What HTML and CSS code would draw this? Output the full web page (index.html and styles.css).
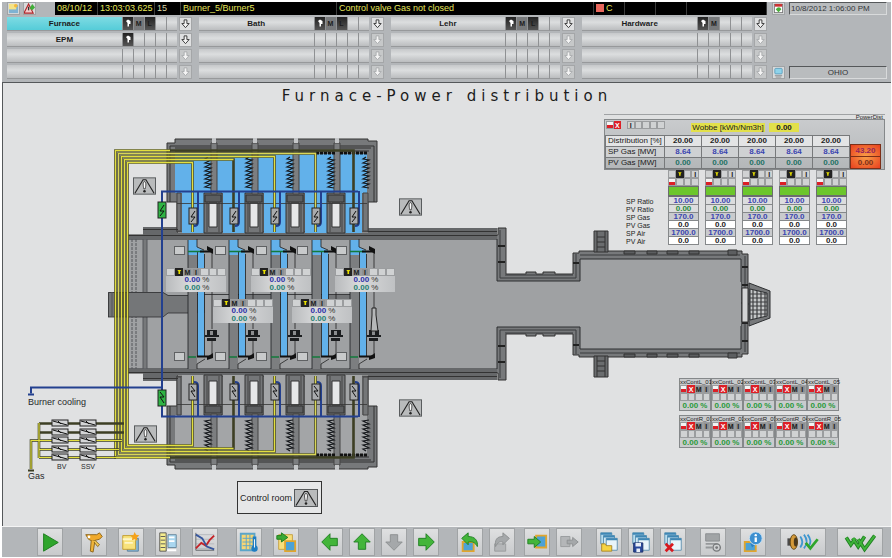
FILE: index.html
```html
<!DOCTYPE html>
<html lang="en">
<head>
  <meta charset="UTF-8" />
  <meta name="viewport" content="width=device-width, initial-scale=1.0"/>
  <title>Furnace - Power distribution</title>
  <link rel="stylesheet" href="styles.css">
</head>
<body>

  <!-- Shared icons -->
  <svg class="sprite" aria-hidden="true">
    <symbol id="i-warn" viewBox="0 0 24 18">
      <rect x=".5" y=".5" width="23" height="17" fill="#b9bbbc" stroke="#55585a"/>
      <path d="M2 16.500L10.500 2.500h3L22 16.500" fill="none" stroke="#222" stroke-width="1.200"/>
      <path d="M12 4.500c-2 0-1.500 4-.7 7.500h1.400c.8-3.500 1.300-7.500-.7-7.500z" fill="#fff" stroke="#222" stroke-width=".8"/>
      <circle cx="12" cy="14.500" r="1.300" fill="#222"/>
    </symbol>
    <symbol id="i-down" viewBox="0 0 12 12">
      <path d="M4.500 1.500h3v4h2.500L6 10 2 5.500h2.500z" fill="#f4f4f4" stroke="currentColor"/>
    </symbol>
    <symbol id="i-hand" viewBox="0 0 8 8">
      <path d="M2 2l2-1.500L6.500 2v3H5v2.500H3.500V4z" fill="#fff"/>
    </symbol>
    <symbol id="i-auto" viewBox="0 0 8 7">
      <path d="M1.500 1h5L5 3v3H3V3z" fill="#e8e000"/>
    </symbol>
    <symbol id="i-page" viewBox="0 0 12 12">
      <rect x="1" y="2" width="10" height="9" fill="#7fb2d2"/>
      <path d="M1 1h8v6H1z" fill="#f6e386"/>
      <circle cx="8.500" cy="3" r="2" fill="#f5b93c"/>
    </symbol>
    <symbol id="i-alarm" viewBox="0 0 12 12">
      <path d="M5 1l5 10H0z" fill="#f3c9c9" stroke="#b02226" stroke-width="1.200"/>
      <path d="M5 4v4" stroke="#333" stroke-width="1.400"/>
      <path d="M6 6l3-5 3 4-3 3z" fill="#3fae3a"/>
    </symbol>
    <symbol id="i-ack" viewBox="0 0 12 12">
      <rect x="1.500" y="1.500" width="9" height="9" fill="#fff" stroke="#777"/>
      <path d="M2 1h8v3H2z" fill="#c33"/>
      <path d="M3 7c2-3 5-3 6 0l-3 3z" fill="#4cae3d"/>
    </symbol>
    <symbol id="i-screen" viewBox="0 0 12 12">
      <rect x="2" y="1.500" width="8" height="6" rx="1" fill="#8fd3ea" stroke="#5d9fbd"/>
      <path d="M2 9.500h8M3 11h6" stroke="#8a8d90"/>
    </symbol>

    <!-- Toolbar icons, all on a 24 grid -->
    <symbol id="t-play" viewBox="0 0 24 24"><path d="M5 3l16 9.500L5 22z" fill="#2fa52c" stroke="#1b7d1c"/></symbol>
    <symbol id="t-key" viewBox="0 0 24 24">
      <path d="M3 4h12l3-2 3 4-3 3-8 2-4-2z" fill="#f0a92a" stroke="#8b6418"/>
      <path d="M9 10l-1 12 3 1 2-12" fill="#f0b53a" stroke="#8b6418"/>
      <path d="M13 10l5 5-2 2-4-5" fill="#f4cd59" stroke="#8b6418"/>
      <circle cx="6.500" cy="6.500" r="1.500" fill="#fff"/>
    </symbol>
    <symbol id="t-window" viewBox="0 0 24 24">
      <path d="M8 8h12v14H8z" fill="#88b8d6" stroke="#5b7f9b"/>
      <path d="M3 5h14v15H3z" fill="#f8e27b" stroke="#c29c2f"/>
      <path d="M3 9h14M5 13h9" stroke="#fdf6c8" stroke-width="2"/>
      <path d="M16 1l1.500 3 3.500.5-2.500 2.500.5 3.500-3-1.500L13 10l.5-3L11 5l3.500-.5z" fill="#f5a21b"/>
    </symbol>
    <symbol id="t-list" viewBox="0 0 24 24">
      <path d="M3 2h7v20H3z" fill="#f5ec8e" stroke="#555"/>
      <path d="M4 6h5M4 10h5M4 14h5M4 18h5" stroke="#555"/>
      <path d="M12 4h9v14h-9z" fill="#a9d6ef" stroke="#68889c"/>
      <path d="M13 7h6M13 11h6M11 21h10" stroke="#fff" stroke-width="2"/>
    </symbol>
    <symbol id="t-chart" viewBox="0 0 24 24">
      <path d="M2 4h20M2 9h20M2 14h20M2 19h20" stroke="#b3b8bc"/>
      <path d="M2 2v19h20" fill="none" stroke="#606468"/>
      <path d="M2 19l6-6 5 3 4-6 5-5" fill="none" stroke="#c42126" stroke-width="2"/>
      <path d="M2 4l7 4 5 9 8 3" fill="none" stroke="#36569d" stroke-width="2"/>
    </symbol>
    <symbol id="t-temp" viewBox="0 0 24 24">
      <path d="M3 3h15v18H3z" fill="#f7d574" stroke="#5ba5c9" stroke-width="2"/>
      <path d="M5 8h11M5 12h11M5 16h11M9 4v16M13 4v16" stroke="#5ba5c9"/>
      <path d="M18 6v12" stroke="#1f7dc2" stroke-width="4"/>
      <circle cx="18" cy="19" r="3.500" fill="#1f7dc2"/>
      <path d="M18 9v9" stroke="#fff"/>
    </symbol>
    <symbol id="t-import" viewBox="0 0 24 24">
      <path d="M4 4h15v16H4z" fill="#f8df7c" stroke="#c4a042"/>
      <path d="M11 11h11v11H11z" fill="#4ca2d6" stroke="#e0a52e" stroke-width="2"/>
      <path d="M2 9V5h5V2l7 5-7 5V9z" fill="#3aa935" stroke="#1b7d1c"/>
    </symbol>
    <symbol id="t-left" viewBox="0 0 24 24"><path d="M3 12l9-9v5h8v8h-8v5z" fill="#43b53a" stroke="#1f7f22"/></symbol>
    <symbol id="t-up" viewBox="0 0 24 24"><path d="M12 3l9 9h-5v8H8v-8H3z" fill="#43b53a" stroke="#1f7f22"/></symbol>
    <symbol id="t-downoff" viewBox="0 0 24 24"><path d="M12 21l9-9h-5V4H8v8H3z" fill="#a5a8aa" stroke="#8c8f91"/></symbol>
    <symbol id="t-right" viewBox="0 0 24 24"><path d="M21 12l-9-9v5H4v8h8v5z" fill="#43b53a" stroke="#1f7f22"/></symbol>
    <symbol id="t-undo" viewBox="0 0 24 24">
      <path d="M4 12h12v10H4z" fill="#4ca2d6" stroke="#e0a52e" stroke-width="2"/>
      <path d="M3 8l7-6v4c7 0 11 4 10 11-2-4-5-6-10-5v3z" fill="#43b53a" stroke="#1f7f22"/>
    </symbol>
    <symbol id="t-redo" viewBox="0 0 24 24">
      <path d="M4 14h12v8H4z" fill="#b4b6b8" stroke="#989b9d"/>
      <path d="M20 8l-7-6v4C6 6 4 10 5 17c2-4 4-6 8-5v3z" fill="#a5a8aa" stroke="#8c8f91"/>
    </symbol>
    <symbol id="t-in" viewBox="0 0 24 24">
      <path d="M11 5h11v13H11z" fill="#4ca2d6" stroke="#e0a52e" stroke-width="2"/>
      <path d="M2 14V9h7V6l7 6-7 6v-4z" fill="#43b53a" stroke="#1f7f22"/>
    </symbol>
    <symbol id="t-out" viewBox="0 0 24 24">
      <path d="M3 6h10v11H3z" fill="#b4b6b8" stroke="#989b9d"/>
      <path d="M10 14v-4h6V7l6 5-6 5v-3z" fill="#a5a8aa" stroke="#8c8f91"/>
    </symbol>
    <symbol id="t-stack" viewBox="0 0 24 24">
      <path d="M3 2h12v12H3z" fill="#b8ddf0" stroke="#5d8fae"/>
      <path d="M6 5h12v12H6z" fill="#cfe8f5" stroke="#5d8fae"/>
      <path d="M9 8h12v13H9z" fill="#e8f4fa" stroke="#5d8fae"/>
      <path d="M3 3h12M6 6h12M9 9h12" stroke="#3f87b5" stroke-width="2"/>
    </symbol>
    <symbol id="t-open" viewBox="0 0 24 24">
      <use href="#t-stack"/>
      <path d="M4 14h4l1 2h6v6H4z" fill="#f6d443" stroke="#a9872a"/>
    </symbol>
    <symbol id="t-save" viewBox="0 0 24 24">
      <use href="#t-stack"/>
      <path d="M4 13h10v10H4z" fill="#28479a" stroke="#1a2f69"/>
      <path d="M6 13h6v4H6zM7 19h4v4H7z" fill="#e8edf6"/>
    </symbol>
    <symbol id="t-delete" viewBox="0 0 24 24">
      <use href="#t-stack"/>
      <path d="M4 14l8 8M12 14l-8 8" stroke="#d8191f" stroke-width="3"/>
    </symbol>
    <symbol id="t-print" viewBox="0 0 24 24">
      <path d="M4 3h15v8H4z" fill="#a1a4a6" stroke="#8a8d8f"/>
      <path d="M4 14h13M4 18h7" stroke="#96999b" stroke-width="2"/>
      <circle cx="16" cy="18" r="4" fill="none" stroke="#77797b" stroke-width="1.500"/>
      <circle cx="16" cy="18" r="1.500" fill="#77797b"/>
    </symbol>
    <symbol id="t-info" viewBox="0 0 24 24">
      <path d="M3 12h12v10H3z" fill="#4ca2d6" stroke="#e0a52e" stroke-width="2"/>
      <path d="M9 13l2 5 4-4z" fill="#2b7fc4"/>
      <circle cx="15" cy="8" r="7" fill="#3c8fd0" stroke="#c7e1f3"/>
      <path d="M15 7v5" stroke="#fff" stroke-width="2.500"/>
      <circle cx="15" cy="4.500" r="1.300" fill="#fff"/>
    </symbol>
    <symbol id="t-horn" viewBox="0 0 40 24">
      <path d="M3 8h4v8H3z" fill="#4a4a4a"/>
      <ellipse cx="10" cy="12" rx="4" ry="8" fill="#d49a3a" stroke="#5d4313"/>
      <ellipse cx="12" cy="12" rx="2" ry="5" fill="#4b3a1e"/>
      <path d="M17 6c3 4 3 8 0 12M21 4c4 5 4 10 0 15M25 4c4 5 4 9 1 13" fill="none" stroke="#3f97d0" stroke-width="2"/>
      <path d="M23 13l5 6 8-10" fill="none" stroke="#2fa52c" stroke-width="3"/>
    </symbol>
    <symbol id="t-ackall" viewBox="0 0 40 24">
      <path d="M5 7l5 8 5-7M12 8l6 9 7-11M18 9l7 11 11-15" fill="none" stroke="#1f7f22" stroke-width="4"/>
      <path d="M5 7l5 8 5-7M12 8l6 9 7-11M18 9l7 11 11-15" fill="none" stroke="#3fb43a" stroke-width="2"/>
    </symbol>
  </svg>

  <div class="screen">

    <header class="header">
      <div class="header-main">
        <div class="alarm-line">
          <button class="mini-btn" aria-label="Pages"><svg><use href="#i-page"/></svg></button>
          <button class="mini-btn" aria-label="Alarms"><svg><use href="#i-alarm"/></svg></button>
          <div class="alarm-strip">
            <span class="a-date">08/10/12</span>
            <span class="a-time">13:03:03.625</span>
            <span class="a-no">15</span>
            <span class="a-source">Burner_5/Burner5</span>
            <span class="a-text">Control valve Gas not closed</span>
            <span class="a-flag"><i></i>C</span>
            <span class="a-flag"></span>
            <span class="a-flag"></span>
            <span class="a-rest"></span>
          </div>
        </div>
        <nav class="groups" id="groups"></nav>
      </div>
      <div class="header-side">
        <div class="side-line">
          <button class="mini-btn" aria-label="Acknowledge"><svg><use href="#i-ack"/></svg></button>
          <input class="field" type="text" readonly aria-label="Date and time" value="10/8/2012 1:06:00 PM">
        </div>
        <div class="side-line">
          <button class="mini-btn" aria-label="Station"><svg><use href="#i-screen"/></svg></button>
          <input class="field field-center" type="text" readonly aria-label="User" value="OHIO">
        </div>
      </div>
    </header>

    <main class="plant">
      <h1>Furnace-Power distribution</h1>

      <svg class="drawing" width="888" height="443" viewBox="3 83 888 443">
        <defs>
          <!-- vertical valve -->
          <g id="valve">
            <rect x="-4" y="-8" width="8" height="16" stroke="#222"/>
            <path d="M2-5L-2 1h4L-2 6" fill="none" stroke="#111"/>
          </g>
          <!-- horizontal valve of the gas train -->
          <g id="hvalve">
            <rect x="0" y="-3" width="16" height="6" fill="#d4d5d6" stroke="#222"/>
            <path d="M1-2l14 4M6-2l3 3" stroke="#111"/>
          </g>
          <g id="window">
            <path d="M-9 193H9v40H-9z" fill="#747678" stroke="#333"/>
            <path d="M-6 196v36M6 196v36" stroke="#444"/>
            <path d="M-8 195h16v7H-8z" fill="#5c5e60" stroke="#333"/>
            <path d="M-4 203h8v24h-8z" fill="#e6e7e8" stroke="#333"/>
          </g>
          <g id="pillar">
            <path d="M-2 143h6v51h-6z" fill="#7c7e80" stroke="#444"/>
            <path d="M-1 138h4v5h-4z" fill="#c4c6c8"/>
          </g>
          <path id="coil" d="M0 157l-3 2 6 1-6 3 6 1-6 3 6 1-6 3 6 1-6 3 6 1-6 3 6 1-6 3 6 1-6 3 6 1" fill="none" stroke="#15181c" stroke-width="1.200"/>
          <g id="feed">
            <path d="M5 191v31q0 4-4 4" fill="none" stroke="#23408f" stroke-width="2"/>
            <use href="#valve" y="216" class="valve-idle"/>
          </g>

          <!-- one row of regenerator chambers with necks and gas lines -->
          <g id="chambers">
            <path d="M128 239v-4h15v-8h35v6h190v-5h129v11z" fill="#66686a"/>
            <path d="M167 143h8v-4h193v2h9v61h-9v30H177v-30h-10z" fill="#77797b" stroke="#333"/>
            <path d="M170 202v-56h204v56M175 148h196M175 151h194" fill="none" stroke="#333"/>
            <path d="M167 203h9v24h-9z" class="outside"/>
            <path d="M175 154h192v39H175z" class="medium"/>
            <path d="M182 193h22v40h-22zM223 193h22v40h-22zM264 193h22v40h-22zM305 193h22v40h-22zM344 193h18v40h-18z" class="medium"/>
            <path d="M177 193h4v38h-4zM363 193h5v38h-5z" fill="#747678" stroke="#444"/>
            <use href="#window" x="213"/><use href="#window" x="254"/>
            <use href="#window" x="295"/><use href="#window" x="336"/>
            <use href="#pillar" x="213"/><use href="#pillar" x="254"/>
            <use href="#pillar" x="295"/><use href="#pillar" x="336"/>
            <use href="#coil" x="208"/><use href="#coil" x="249"/><use href="#coil" x="290"/>
            <use href="#coil" x="331"/><use href="#coil" x="366"/>
            <path d="M177 203.500h190" stroke="#333" stroke-width=".8"/>
            <path d="M316 153h20M340 153h28" stroke="#111" stroke-width="3" stroke-dasharray="3 1"/>
            <path d="M128 235.500h369M143 229.500h35M368 231.500h129" stroke="#333"/>

            <g fill="none" stroke="#3d3f24" stroke-width="2.600">
              <path d="M115.500 304V150.500H353.500V232"/>
              <path d="M118.500 304V153.500H315.500V232"/>
              <path d="M121.500 304V156.500H274.500V232"/>
              <path d="M124.500 304V159.500H233.500V232"/>
              <path d="M127.500 304V162.500H192.500V232"/>
            </g>
            <g fill="none" stroke="#e3df3e" stroke-width="1.300">
              <path d="M115.500 304V150.500H170"/>
              <path d="M118.500 304V153.500H315.500V232" stroke="#d9d657"/>
              <path d="M121.500 304V156.500H274.500V232"/>
              <path d="M124.500 304V159.500H233.500"/>
              <path d="M127.500 304V162.500H192.500V232"/>
            </g>
            <path d="M162 304V191.500H358" fill="none" stroke="#23408f" stroke-width="2"/>
            <use href="#feed" x="193"/><use href="#feed" x="234"/><use href="#feed" x="275"/>
            <use href="#feed" x="316"/><use href="#feed" x="354"/>
            <use href="#valve" x="162" y="210" fill="#2fb344"/>
          </g>

          <!-- burner lance inside the melter, origin at the air shaft -->
          <g id="burner">
            <path d="M0 251h9v119H0z" fill="#7c7e80"/>
            <path d="M0 240h9v7l7 4v4H0z" fill="#62b1ea"/>
            <path d="M10 252h6v104h-6z" fill="#62b1ea"/>
            <path d="M0 370V240M9 239v8l7 3M9.500 252v104M16.500 254v102" fill="none" stroke="#1b1d1f" stroke-width=".8"/>
            <path d="M0 251.500h16M0 357h8" stroke="#137a3b" stroke-width="1.500"/>
            <path d="M12 251.500h12M9 356.500h15" stroke="#111" stroke-width="2"/>
            <path d="M19 246v4l6 4v-5zM19 360v-3l6-4v5z" fill="#111"/>
            <path d="M24 253v76M24 338v17M9 370v-6l8-5" fill="none" stroke="#222" stroke-width=".8"/>
            <path d="M19 330h10v5l2 0v2H17v-2h2zM19 338h9v3h-9z" fill="#1b1d1f"/>
            <path d="M22 331h3v4h-3z" fill="#8b8d8f"/>
          </g>
          <g id="sensor">
            <rect x=".5" y="246.500" width="10" height="8" fill="#c8cacb" stroke="#5f6163"/>
            <rect x=".5" y="352.500" width="10" height="8" fill="#c8cacb" stroke="#5f6163"/>
          </g>
          <!-- upper half of the shell from the melter to the working end -->
          <g id="shell">
            <path d="M128 235h370v-7h8v46h20v-2h10v2h7v-2h12v2h18v-21h6v-2h163v3h6v51H128z" fill="#77797b" stroke="#333"/>
            <path d="M128 239h369v42h83v-22h161v46H128z" fill="#9fa1a3" stroke="#2d2f31"/>
            <path d="M500 230v48h76v-24M505 275h68M580 255h160M745 256v40" fill="none" stroke="#3a3c3e"/>
            <path d="M624 251h11v3h-11zM647 251h10v3h-10zM667 251h11v3h-11zM689 251h10v3h-10zM728 250h9v5h-9z" fill="#5c5e60" stroke="#333"/>
            <path d="M594 231h14v21h-14z" fill="#6b6d6f" stroke="#333"/>
            <path d="M597 231v21M605 231v21M597 237h8M597 242h8M597 247h8" stroke="#333"/>
            <path d="M498 246h7M498 262h7M573 263h6M742 267h6M742 285h6" stroke="#222" stroke-width="2"/>
          </g>
        </defs>

        <!-- Melter and working end -->
        <use href="#shell"/>
        <use href="#shell" transform="matrix(1 0 0 -1 0 608)"/>
        <path d="M129 282h612v44H129z" fill="#9fa1a3"/>
        <path d="M742 288h6v34h-6z" fill="#d4d5d6" stroke="#333"/>
        <path d="M749 283l21 8v27l-21 8z" fill="#77797b" stroke="#2d2f31"/>
        <path d="M750 289l17 4v23l-17 4z" fill="#c5c7c8" stroke="#2d2f31"/>
        <path d="M753 290v29M757 291v27M761 292v25M765 293v23M750 294h17M750 298h17M750 302h17M750 306h17M750 310h17M750 314h17" stroke="#3c3e40" stroke-width="1.200"/>
        <path d="M132 239v130M136 239v130" stroke="#55575a" stroke-dasharray="3 1"/>
        <path d="M143 239h4v130h-4z" fill="#77797b" stroke="#55575a"/>

        <!-- Batch charger and throat -->
        <path d="M108 292h55l5 3h20v-1h162v19H168l-5 4h-55z" fill="#747678"/>
        <path d="M108.500 317V292.500H163l5 3h20M108 317h55l5-4h20M188 294.500h162" fill="none" stroke="#2d2f31" stroke-width=".8"/>
        <path d="M112 292v25" stroke="#55575a"/>
        <path d="M205 295h24v18h-24zM287 295h25v18h-25z" fill="#9fa1a3"/>

        <use href="#burner" x="188"/><use href="#burner" x="229"/><use href="#burner" x="271"/>
        <use href="#burner" x="312"/><use href="#burner" x="350"/>
        <path d="M371 331l1-16v-7h4v7l2 16z" fill="#b5b7b8" stroke="#222"/>
        <use href="#sensor" x="174"/><use href="#sensor" x="215"/><use href="#sensor" x="256"/>
        <use href="#sensor" x="297"/><use href="#sensor" x="336"/>

        <!-- Regenerators, fired side on top -->
        <use href="#chambers" class="fired"/>
        <use href="#chambers" class="exhaust" transform="matrix(1 0 0 -1 0 608)"/>

        <!-- Burner cooling -->
        <path d="M162 387.500H31v6" fill="none" stroke="#23408f" stroke-width="2"/>
        <path d="M28 394.500h6" stroke="#23408f" stroke-width="2"/>

        <!-- Gas train -->
        <g fill="none" stroke-width="2.600" stroke="#3d3f24">
          <path d="M39 457.500H116M39 449.500H119M31 469V440.500H122M39 432.500H124M39 423.500H124M39 423v35"/>
        </g>
        <g fill="none" stroke-width="1.200" stroke="#e3df3e">
          <path d="M39 457.500H116M39 449.500H119M31 469V440.500H122M39 423v35"/>
        </g>
        <path d="M28 470.500h6" stroke="#3d3f24" stroke-width="2"/>
        <use href="#hvalve" x="52" y="423"/><use href="#hvalve" x="80" y="423"/>
        <use href="#hvalve" x="52" y="432"/><use href="#hvalve" x="80" y="432"/>
        <use href="#hvalve" x="52" y="440"/><use href="#hvalve" x="80" y="440"/>
        <use href="#hvalve" x="52" y="449"/><use href="#hvalve" x="80" y="449"/>
        <use href="#hvalve" x="52" y="457"/><use href="#hvalve" x="80" y="457"/>
        <text x="28" y="405" class="tag">Burner cooling</text>
        <text x="28" y="479" class="tag">Gas</text>
        <text x="57" y="469" class="tag-small">BV</text>
        <text x="81" y="469" class="tag-small">SSV</text>

        <use href="#i-warn" x="133" y="177" width="23" height="18"/>
        <use href="#i-warn" x="399" y="198" width="23" height="18"/>
        <use href="#i-warn" x="134" y="425" width="23" height="18"/>
        <use href="#i-warn" x="399" y="399" width="23" height="18"/>
      </svg>

      <div id="faceplates"></div>

      <button class="control-room">Control room <svg><use href="#i-warn"/></svg></button>

      <section class="power">
        <div class="power-title">PowerDist</div>
        <div class="power-body">
          <div class="power-head">
            <span class="status"><b class="half"></b><b class="bad">X</b></span>
            <span class="status status-info"><b>I</b><b></b><b></b><b></b><b></b></span>
            <span class="wobbe">Wobbe [kWh/Nm3h]</span>
            <span class="wobbe wobbe-value">0.00</span>
          </div>
          <div class="power-row">
            <table class="distribution">
              <tr class="set"><th>Distribution [%]</th><td>20.00</td><td>20.00</td><td>20.00</td><td>20.00</td><td>20.00</td></tr>
              <tr class="sp"><th>SP Gas [MW]</th><td>8.64</td><td>8.64</td><td>8.64</td><td>8.64</td><td>8.64</td></tr>
              <tr class="pv"><th>PV Gas [MW]</th><td>0.00</td><td>0.00</td><td>0.00</td><td>0.00</td><td>0.00</td></tr>
            </table>
            <div class="total"><span>43.20</span><span>0.00</span></div>
          </div>
        </div>
        <table class="ratios" id="ratios"></table>
      </section>

      <section class="controllers" id="controllers"></section>
    </main>

    <footer class="toolbar">
      <div class="tools tools-left">
        <div class="tool-group">
          <button aria-label="Start"><svg><use href="#t-play"/></svg></button>
        </div>
        <div class="tool-group wide-gap">
          <button aria-label="Login"><svg><use href="#t-key"/></svg></button>
          <button aria-label="New window"><svg><use href="#t-window"/></svg></button>
          <button aria-label="List"><svg><use href="#t-list"/></svg></button>
          <button aria-label="Trend"><svg><use href="#t-chart"/></svg></button>
        </div>
        <div class="tool-group wide-gap">
          <button aria-label="Temperatures"><svg><use href="#t-temp"/></svg></button>
          <button aria-label="Import"><svg><use href="#t-import"/></svg></button>
        </div>
        <div class="tool-group">
          <button aria-label="Left"><svg><use href="#t-left"/></svg></button>
          <button aria-label="Up"><svg><use href="#t-up"/></svg></button>
          <button aria-label="Down" disabled><svg><use href="#t-downoff"/></svg></button>
          <button aria-label="Right"><svg><use href="#t-right"/></svg></button>
        </div>
        <div class="tool-group">
          <button aria-label="Back"><svg><use href="#t-undo"/></svg></button>
          <button aria-label="Forward" disabled><svg><use href="#t-redo"/></svg></button>
        </div>
      </div>
      <div class="tools tools-right">
        <div class="tool-group">
          <button aria-label="Enter picture"><svg><use href="#t-in"/></svg></button>
          <button aria-label="Leave picture" disabled><svg><use href="#t-out"/></svg></button>
        </div>
        <div class="tool-group">
          <button aria-label="Open set"><svg><use href="#t-open"/></svg></button>
          <button aria-label="Save set"><svg><use href="#t-save"/></svg></button>
          <button aria-label="Delete set"><svg><use href="#t-delete"/></svg></button>
        </div>
        <div class="tool-group">
          <button aria-label="Print" disabled><svg><use href="#t-print"/></svg></button>
        </div>
        <div class="tool-group">
          <button aria-label="Info"><svg><use href="#t-info"/></svg></button>
        </div>
        <div class="tool-group wide-gap">
          <button class="wide" aria-label="Silence horn"><svg><use href="#t-horn"/></svg></button>
          <button class="wide" aria-label="Acknowledge all"><svg><use href="#t-ackall"/></svg></button>
        </div>
      </div>
    </footer>

  </div>

  <script src="script.js"></script>
</body>
</html>
```

FILE: styles.css
```css
* {
  box-sizing: border-box;
  margin: 0;
  padding: 0;
}

body {
  font-family: "Liberation Sans", Arial, sans-serif;
  font-size: 9px;
  color: #1c1c1c;
  background: #fff;
}

button {
  font: inherit;
  color: inherit;
  cursor: pointer;
}

.sprite {
  position: absolute;
  width: 0;
  height: 0;
}

.screen {
  display: flex;
  flex-direction: column;
  min-height: 100vh;
  padding: 2px 1px 1px 2px;
}

/* Header */
.header {
  display: flex;
  gap: 5px;
  height: 80px;
  padding: 0 4px 0 5px;
  background: #b3b6b9;
}

.header-main {
  flex: 1;
}

.alarm-line,
.side-line {
  display: flex;
  gap: 3px;
  height: 13px;
}

.mini-btn {
  width: 13px;
  height: 13px;
  border: 1px solid #a0a3a5;
  background: #d8dadb;
}

.mini-btn svg {
  display: block;
  width: 11px;
  height: 11px;
}

.alarm-strip {
  display: flex;
  flex: 1;
  margin-left: 16px;
  background: #000;
  color: #e6e65a;
  line-height: 13px;
  white-space: nowrap;
}

.alarm-strip span {
  padding-left: 2px;
  border-right: 1px solid #3c3c3c;
}

.a-date { width: 43px; }
.a-time { width: 57px; }
.a-no { width: 26px; color: #d8d8a8; }
.a-source { width: 156px; }
.a-text { flex: 1; }
.a-flag { width: 31px; }
.a-rest { width: 80px; }

.a-flag i {
  display: inline-block;
  width: 8px;
  height: 8px;
  margin-right: 2px;
  background: #e8675c;
  vertical-align: -1px;
}

.groups {
  display: grid;
  grid-template-columns: repeat(4, 1fr);
  gap: 2px 7px;
  grid-auto-flow: column;
  grid-template-rows: repeat(4, 14px);
  margin-top: 2px;
}

.group-row {
  display: flex;
}

.group-name {
  flex: 1;
  border: 0;
  background: linear-gradient(#c6c8ca, #dcdedf 40%, #bbbdbf);
  border-bottom: 1px solid #97999b;
  font-size: 8px;
  font-weight: bold;
  line-height: 13px;
}

.group-name.active {
  background: linear-gradient(#7edbe3, #55ccd8);
}

.lamp {
  width: 11px;
  border-left: 1px solid #8f9193;
  border-bottom: 1px solid #97999b;
  background: linear-gradient(#c6c8ca, #dcdedf 40%, #bbbdbf);
  font-size: 7px;
  font-weight: bold;
  font-style: normal;
  line-height: 13px;
  text-align: center;
}

.lamp svg {
  display: block;
  width: 8px;
  height: 8px;
  margin: 2px 1px;
}

.lamp.hand,
.lamp.limit {
  background: linear-gradient(#222, #555);
}

.lamp.manual {
  background: #77797b;
}

.group-go {
  width: 13px;
  margin-left: 2px;
  border: 1px solid #a4a6a8;
  background: #dfe0e1;
  color: #333;
}

.group-go:disabled {
  background: #c6c8c9;
  color: #a9abad;
}

.group-go svg {
  display: block;
  width: 11px;
  height: 12px;
}

.header-side {
  display: flex;
  flex-direction: column;
  justify-content: space-between;
  width: 115px;
  padding-bottom: 3px;
}

.field {
  flex: 1;
  min-width: 0;
  margin-left: 1px;
  padding: 0 1px;
  border: 1px solid;
  border-color: #55585a #d8dadb #d8dadb #55585a;
  background: #b9bcbe;
  font: inherit;
  font-size: 8px;
  color: #33363a;
}

.field-center {
  text-align: center;
}

/* Plant picture */
.plant {
  position: relative;
  flex: 1;
  min-height: 444px;
  border-top: 1px solid #55585a;
  border-left: 1px solid #55585a;
  background: #e0e1e2;
}

.plant h1 {
  position: absolute;
  top: 4px;
  width: 100%;
  font-family: "DejaVu Sans", Verdana, sans-serif;
  font-size: 15px;
  font-weight: normal;
  line-height: 18px;
  letter-spacing: 5px;
  text-align: center;
}

.drawing {
  display: block;
}

.fired { --medium: #62b1ea; }
.exhaust { --medium: #a3a5a7; }
.medium { fill: var(--medium); }
.outside { fill: #e0e1e2; }
.valve-idle { fill: #a9abad; }
.tag { font-size: 9px; fill: #26282a; }
.tag-small { font-size: 7px; fill: #26282a; }

.faceplate {
  position: absolute;
  width: 60px;
  background: linear-gradient(90deg, #b9bbbd, #d9dadb 40%, #bfc1c3);
  font-size: 8px;
  font-weight: bold;
  line-height: 8px;
  text-align: center;
}

.status {
  display: flex;
}

.status b {
  flex: 1;
  height: 8px;
  border: 1px solid #9b9d9f;
  background: #d0d2d3;
  font-size: 7px;
  line-height: 7px;
  text-align: center;
}

.status .auto {
  border-color: #222;
  background: #222;
}

.status .auto svg {
  display: block;
  width: 100%;
  height: 6px;
}

.status .letter {
  background: #8f9193;
}

.status .half {
  background: linear-gradient(#f3f3f3 50%, #dc1f26 50%);
}

.status .bad {
  border-color: #dc1f26;
  background: #dc1f26;
  color: #fff;
}

.faceplate p {
  padding-left: 2px;
}

.sp-value { color: #2b2fa8; }
.pv-value { color: #1f8072; }
.unit { color: #333; font-weight: normal; }

.control-room {
  position: absolute;
  left: 234px;
  top: 398px;
  display: flex;
  align-items: center;
  gap: 2px;
  height: 33px;
  padding: 0 3px 0 2px;
  border: 1px solid #333;
  background: #e6e7e8;
}

.control-room svg {
  width: 24px;
  height: 18px;
}

/* Power distribution */
.power {
  position: absolute;
  left: 601px;
  top: 31px;
  width: 281px;
}

.power-title {
  height: 5px;
  padding-right: 2px;
  border-top: 1px solid #a0a2a4;
  font-size: 6px;
  line-height: 5px;
  text-align: right;
}

.power-body {
  padding-right: 3px;
  border: 1px solid #85888a;
  background: linear-gradient(#c9cbcd, #b4b7b9);
}

.power-head {
  display: flex;
  align-items: flex-start;
  height: 15px;
  padding: 1px;
}

.power-head .status {
  width: 15px;
}

.power-head .status-info {
  width: 38px;
  margin-left: 6px;
}

.wobbe {
  width: 74px;
  margin: 2px 4px 0 26px;
  background: #e2e04a;
  font-size: 8px;
  line-height: 9px;
  text-align: center;
  white-space: nowrap;
}

.wobbe-value {
  width: 30px;
  margin-left: 0;
  font-weight: bold;
}

.power-row {
  display: flex;
  align-items: flex-end;
}

.distribution {
  border-collapse: collapse;
  table-layout: fixed;
  width: 244px;
}

.distribution th,
.distribution td {
  width: 37px;
  height: 11px;
  border: 1px solid #77797b;
  font-size: 8px;
  line-height: 10px;
  text-align: center;
}

.distribution th {
  width: 59px;
  padding-left: 2px;
  font-weight: normal;
  text-align: left;
  white-space: nowrap;
}

.distribution td { font-weight: bold; }
.distribution .set { background: #e3e4e5; }
.distribution .sp { background: #cfd1d3; }
.distribution .sp td { color: #3a45b0; }
.distribution .pv td { color: #1f7264; }

.total {
  display: flex;
  flex: 1;
  flex-direction: column;
  border: 1px solid #7c2f18;
  background: radial-gradient(#f9a048, #e8401f);
  font-size: 8px;
  font-weight: bold;
  line-height: 11px;
  text-align: center;
}

.total span + span {
  border-top: 1px solid #7c2f18;
  color: #7c2f18;
}

.total span:first-child { color: #94245a; }

.ratios {
  margin-left: 14px;
  border-spacing: 0;
  table-layout: fixed;
  width: 229px;
}

.ratios th {
  width: 44px;
  padding-left: 8px;
  font-size: 7px;
  font-weight: normal;
  text-align: left;
  white-space: nowrap;
}

.ratios td {
  width: 37px;
  height: 8px;
  padding-left: 6px;
  font-size: 8px;
  font-weight: bold;
  line-height: 7px;
  text-align: center;
}

.ratios td > span {
  display: block;
  height: 8px;
  border: 1px solid #85888a;
  border-top: 0;
}

.ratios .sp span { background: #c9cbcd; color: #3a45b0; }
.ratios .ratio span { background: #dcddde; }
.ratios .pv span { background: #fff; }
.ratios .pv.ratio span { background: #dcddde; color: #2a8a3a; }

.bar {
  height: 11px;
  border: 1px solid #6b6d6f;
  border-width: 1px 1px 2px;
  background: #6cc62c;
}

/* Controllers */
.controllers {
  position: absolute;
  left: 676px;
  top: 295px;
  display: grid;
  grid-template-columns: repeat(5, 32px);
  row-gap: 4px;
}

.controller {
  border: 1px solid #85888a;
  background: #c9cbcd;
}

.controller h2 {
  height: 6px;
  font-family: "Liberation Sans Narrow", "Liberation Sans", Arial, sans-serif;
  font-size: 6px;
  font-weight: normal;
  line-height: 6px;
  white-space: nowrap;
}

.controller p {
  font-size: 8px;
  font-weight: bold;
  line-height: 9px;
  text-align: center;
  color: #2a9a3a;
}

/* Toolbar */
.toolbar {
  display: flex;
  justify-content: space-between;
  align-items: center;
  height: 31px;
  padding: 0 8px 0 35px;
  border-top: 1px solid #f4f4f4;
  background: #b3b6b9;
}

.tools { display: flex; }
.tools-left { gap: 18px; }
.tools-right { gap: 14px; }

.tool-group {
  display: flex;
  gap: 6px;
}

.tool-group.wide-gap {
  gap: 11px;
}

.tool-group button {
  width: 26px;
  height: 28px;
  border: 1px solid #a0a3a5;
  background: linear-gradient(#dfe0e1, #c8cacc);
}

.tool-group button.wide {
  width: 46px;
}

.tool-group svg {
  display: block;
  width: 22px;
  height: 22px;
  margin: 0 auto;
}

.tool-group .wide svg {
  width: 40px;
}
```

FILE: script.js
```js
// Status groups in the header, four rows each
const groups = [
  [["Furnace", 3, true], ["EPM", 1]],
  [["Bath", 3]],
  [["Lehr", 3]],
  [["Hardware", 2]],
];

const lamps = [
  '<i class="lamp hand"><svg><use href="#i-hand"/></svg></i>',
  '<i class="lamp manual">M</i>',
  '<i class="lamp limit">L</i>',
];

let html = "";
groups.forEach((rows) => {
  for (let r = 0; r < 4; r++) {
    const [name, on, active] = rows[r] || ["", 0, false];
    html += `<div class="group-row"><button class="group-name${active ? " active" : ""}">${name}</button>`;
    for (let i = 0; i < 5; i++) {
      html += i < on ? lamps[i] : '<i class="lamp"></i>';
    }
    html += `<button class="group-go" aria-label="Open" ${name ? "" : "disabled"}><svg><use href="#i-down"/></svg></button></div>`;
  }
});
document.getElementById("groups").innerHTML = html;

// Burner faceplates on the melter
const auto = '<b class="auto"><svg><use href="#i-auto"/></svg></b>';
const faceplates = [[163, 185], [210, 216], [248, 185], [289, 216], [332, 185]];

document.getElementById("faceplates").innerHTML = faceplates.map(([x, y]) => `
  <div class="faceplate" style="left:${x}px;top:${y}px">
    <div class="status"><b></b>${auto}<b class="letter">M</b><b class="letter">I</b><b></b><b></b><b></b></div>
    <p class="sp-value">0.00 <span class="unit">%</span></p>
    <p class="pv-value">0.00 <span class="unit">%</span></p>
  </div>`).join("");

// Ratio table under the power distribution
const ratios = [
  ["SP Ratio", "10.00", "sp ratio"],
  ["PV Ratio", "0.00", "pv ratio"],
  ["SP Gas", "170.0", "sp"],
  ["PV Gas", "0.0", "pv"],
  ["SP Air", "1700.0", "sp"],
  ["PV Air", "0.0", "pv"],
];

const head = `<td>
  <div class="status"><b></b>${auto}<b></b><b>I</b></div>
  <div class="status"><b class="half"></b><b></b><b></b><b></b></div>
  <div class="bar"></div></td>`;

document.getElementById("ratios").innerHTML =
  `<tr><th></th>${head.repeat(5)}</tr>` +
  ratios.map(([label, value, cls]) =>
    `<tr class="${cls}"><th>${label}</th>${`<td><span>${value}</span></td>`.repeat(5)}</tr>`
  ).join("");

// Controllers, left and right side
let list = "";
["L", "R"].forEach((side) => {
  for (let n = 1; n <= 5; n++) {
    list += `
      <div class="controller">
        <h2>xxCont${side}_0${n}</h2>
        <div class="status"><b class="half"></b><b class="bad">X</b><b class="letter">M</b><b class="letter">I</b></div>
        <div class="status"><b></b><b></b><b></b><b></b></div>
        <p>0.00 %</p>
      </div>`;
  }
});
document.getElementById("controllers").innerHTML = list;
```
